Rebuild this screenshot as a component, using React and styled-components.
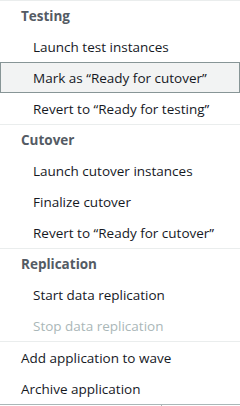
import React from "react";
import styled, { createGlobalStyle } from "styled-components";

const groups = [
  {
    title: "Testing",
    items: [
      { label: "Launch test instances" },
      { label: "Mark as “Ready for cutover”", highlighted: true },
      { label: "Revert to “Ready for testing”" },
    ],
  },
  {
    title: "Cutover",
    items: [
      { label: "Launch cutover instances" },
      { label: "Finalize cutover" },
      { label: "Revert to “Ready for cutover”" },
    ],
  },
  {
    title: "Replication",
    items: [
      { label: "Start data replication" },
      { label: "Stop data replication", disabled: true },
    ],
  },
];

const bottomItems = ["Add application to wave", "Archive application"];

const App = () => {
  return (
    <>
      <GlobalStyle />
      <Menu>
        {groups.map((g) => (
          <Group key={g.title}>
            <Header>{g.title}</Header>
            {g.items.map((item) => (
              <Item
                key={item.label}
                $nested
                $highlighted={item.highlighted}
                $disabled={item.disabled}
              >
                {item.label}
              </Item>
            ))}
          </Group>
        ))}
        {bottomItems.map((label) => (
          <Item key={label}>{label}</Item>
        ))}
      </Menu>
      <Below />
    </>
  );
};

const GlobalStyle = createGlobalStyle`
  body {
    margin: 0;
    background: #ffffff;
    font-family: "Open Sans", "Noto Sans", sans-serif;
  }
`;

const Menu = styled.div`
  width: 240px;
  display: flex;
  flex-direction: column;
  border-top: 1px solid #eaeded;
  border-bottom: 1px solid #aab7b8;
  background: #ffffff;
`;

const Group = styled.div`
  display: flex;
  flex-direction: column;
  border-bottom: 1px solid #eaeded;
`;

const Header = styled.div`
  height: 30px;
  display: flex;
  align-items: center;
  padding-left: 21px;
  font-size: 13.5px;
  font-weight: 700;
  color: #545b64;
`;

const Item = styled.div`
  box-sizing: border-box;
  height: 31px;
  display: flex;
  align-items: center;
  padding-left: ${(p) => (p.$nested ? "32px" : "20px")};
  font-size: 13.5px;
  color: ${(p) => (p.$disabled ? "#aab7b8" : "#16191f")};
  background: ${(p) => (p.$highlighted ? "#f2f3f3" : "transparent")};
  border: 1px solid ${(p) => (p.$highlighted ? "#879596" : "transparent")};
  white-space: nowrap;
`;

const Below = styled.div`
  height: 4px;
  margin-left: 161px;
  border-left: 1px solid #aab7b8;
`;

export default App;
